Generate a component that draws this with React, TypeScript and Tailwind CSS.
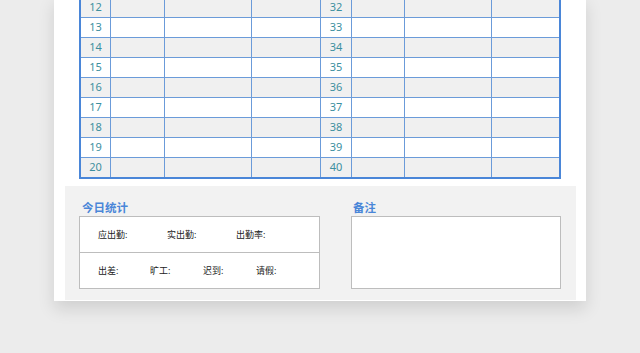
const cols = ["w-[30px]", "w-[54px]", "w-[87px]", "w-[69px]", "w-[31px]", "w-[53px]", "w-[87px]", "w-[67px]"];

const rows = [12, 13, 14, 15, 16, 17, 18, 19, 20];

function Row({ n, last }: { n: number; last: boolean }) {
  const shaded = n % 2 === 0;
  return (
    <div
      className={`flex ${last ? "h-[19px]" : "h-[20px] border-b border-[#6b9bd9]"} ${shaded ? "bg-[#f0f0f0]" : "bg-white"}`}
    >
      {cols.map((w, i) => (
        <div
          key={i}
          className={`${w} shrink-0 flex items-center justify-center text-[11px] text-[#3d8f9f] ${i < cols.length - 1 ? "border-r border-[#6b9bd9]" : ""}`}
        >
          {i === 0 ? n : i === 4 ? n + 20 : ""}
        </div>
      ))}
    </div>
  );
}

function Label({ text, w }: { text: string; w: string }) {
  return <div className={`${w} shrink-0 text-[9px] text-[#222]`}>{text}:</div>;
}

export default function App() {
  return (
    <div
      className="w-[640px] h-[353px] overflow-hidden bg-[#ececec]"
      style={{ fontFamily: '"Noto Sans", "Noto Sans CJK SC", sans-serif' }}
    >
      <div className="ml-[54px] w-[532px] -mt-[4px] bg-white pb-[1px] shadow-[0_8px_16px_rgba(0,0,0,0.12)]">
        <div className="ml-[25px] w-[482px] border-2 border-[#4a86d8]">
          {rows.map((n, i) => (
            <Row key={n} n={n} last={i === rows.length - 1} />
          ))}
        </div>

        <div className="mt-[7px] ml-[11px] w-[511px] h-[114px] bg-[#f2f2f2] flex gap-[31px] pl-[14px] pt-[14px]">
          <div className="w-[241px]">
            <div className="ml-[3px] text-[11.5px] font-bold leading-[16px] text-[#4a86d8]">今日统计</div>
            <div className="h-[73px] border border-[#bdbdbd] bg-white flex flex-col">
              <div className="flex-1 flex items-center pl-[18px] border-b border-[#bdbdbd]">
                <Label text="应出勤" w="w-[69px]" />
                <Label text="实出勤" w="w-[69px]" />
                <Label text="出勤率" w="w-[60px]" />
              </div>
              <div className="flex-1 flex items-center pl-[18px]">
                <Label text="出差" w="w-[52px]" />
                <Label text="旷工" w="w-[53px]" />
                <Label text="迟到" w="w-[53px]" />
                <Label text="请假" w="w-[40px]" />
              </div>
            </div>
          </div>
          <div className="w-[210px]">
            <div className="ml-[2px] text-[11.5px] font-bold leading-[16px] text-[#4a86d8]">备注</div>
            <div className="h-[73px] border border-[#bdbdbd] bg-white"></div>
          </div>
        </div>
      </div>
    </div>
  );
}
